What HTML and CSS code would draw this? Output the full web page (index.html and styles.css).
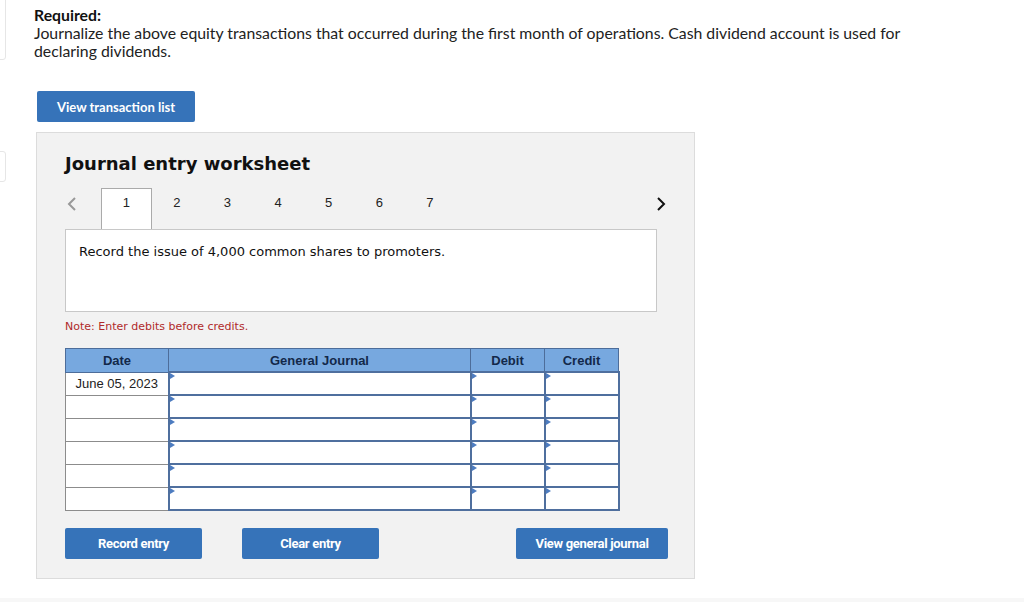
FILE: index.html
```html
<!DOCTYPE html>
<html lang="en">

<head>
    <meta charset="UTF-8">
    <title>Journal entry worksheet</title>
    <link rel="stylesheet" href="styles.css">
</head>

<body>
    <div class="edge edge_top"></div>
    <div class="edge edge_mid"></div>
    <div class="page">
        <div class="required">
            <b>Required:</b>
            <p>Journalize the above equity transactions that occurred during the first month of operations. Cash dividend account is used for declaring dividends.</p>
        </div>
        <button class="btn btn_list">View transaction list</button>

        <div class="sheet">
            <h2>Journal entry worksheet</h2>
            <div class="tabs">
                <span class="arrow arrow_prev">
                    <svg width="10" height="14" viewBox="0 0 10 14"><path d="M8 1 L2 7 L8 13" fill="none" stroke="#999" stroke-width="2"/></svg>
                </span>
                <ul>
                    <li class="on">1</li>
                    <li>2</li>
                    <li>3</li>
                    <li>4</li>
                    <li>5</li>
                    <li>6</li>
                    <li>7</li>
                </ul>
                <span class="arrow arrow_next">
                    <svg width="10" height="14" viewBox="0 0 10 14"><path d="M2 1 L8 7 L2 13" fill="none" stroke="#111" stroke-width="2"/></svg>
                </span>
            </div>
            <div class="task">Record the issue of 4,000 common shares to promoters.</div>
            <p class="note">Note: Enter debits before credits.</p>

            <table class="journal">
                <thead>
                    <tr>
                        <th class="c_date">Date</th>
                        <th class="c_acct">General Journal</th>
                        <th class="c_amt">Debit</th>
                        <th class="c_amt">Credit</th>
                    </tr>
                </thead>
                <tbody>
                    <tr>
                        <td class="date">June 05, 2023</td>
                        <td class="cell"></td>
                        <td class="cell"></td>
                        <td class="cell"></td>
                    </tr>
                    <tr>
                        <td class="date"></td>
                        <td class="cell"></td>
                        <td class="cell"></td>
                        <td class="cell"></td>
                    </tr>
                    <tr>
                        <td class="date"></td>
                        <td class="cell"></td>
                        <td class="cell"></td>
                        <td class="cell"></td>
                    </tr>
                    <tr>
                        <td class="date"></td>
                        <td class="cell"></td>
                        <td class="cell"></td>
                        <td class="cell"></td>
                    </tr>
                    <tr>
                        <td class="date"></td>
                        <td class="cell"></td>
                        <td class="cell"></td>
                        <td class="cell"></td>
                    </tr>
                    <tr>
                        <td class="date"></td>
                        <td class="cell"></td>
                        <td class="cell"></td>
                        <td class="cell"></td>
                    </tr>
                </tbody>
            </table>

            <div class="actions">
                <button class="btn btn_act">Record entry</button>
                <button class="btn btn_act">Clear entry</button>
                <button class="btn btn_act btn_view">View general journal</button>
            </div>
        </div>
    </div>
    <div class="foot"></div>
</body>

</html>
```

FILE: styles.css
```css
html,
body {
    width: 100%;
    height: 100%;
    margin: 0;
    padding: 0;
    background: #fff;
    overflow: hidden;
}

ul {
    margin: 0;
    padding: 0;
    list-style: none;
}

.edge {
    position: absolute;
    left: -4px;
    width: 8px;
    border: 1px solid #e6e6e6;
    border-radius: 3px;
}

.edge_top {
    top: -4px;
    height: 62px;
}

.edge_mid {
    top: 151px;
    height: 29px;
}

.page {
    padding: 6px 0 0 34px;
}

.required {
    font-family: Lato, "Open Sans", sans-serif;
    font-size: 15.8px;
    line-height: 18px;
    color: #222;
    width: 900px;
}

.required b {
    display: block;
    font-weight: 700;
    color: #111;
}

.required p {
    margin: 0;
}

.btn {
    border: 0;
    border-radius: 2px;
    background: #3673b9;
    color: #fff;
    font-weight: 700;
    cursor: pointer;
    padding: 0;
}

.btn_list {
    display: block;
    margin: 31px 0 0 3px;
    width: 158px;
    height: 31px;
    font-family: Lato, "Open Sans", sans-serif;
    font-size: 13px;
}

.sheet {
    margin: 10px 0 0 2px;
    width: 629px;
    height: 425px;
    padding: 20px 0 0 28px;
    background: #f2f2f2;
    border: 1px solid #dcdcdc;
}

.sheet h2 {
    margin: 0;
    font-family: "DejaVu Sans", Verdana, sans-serif;
    font-size: 18px;
    line-height: 22px;
    font-weight: 700;
    color: #111;
}

.tabs {
    display: flex;
    align-items: flex-start;
    margin-top: 14px;
    width: 601px;
    height: 41px;
    font-family: "Liberation Sans", Arial, sans-serif;
    font-size: 13px;
    color: #222;
}

.arrow {
    display: flex;
    align-items: center;
    height: 30px;
}

.arrow_prev {
    width: 35px;
    padding-left: 2px;
}

.arrow_next {
    margin-left: auto;
}

.tabs ul {
    display: flex;
    margin-left: -1px;
}

.tabs li {
    width: 50.6px;
    height: 30px;
    line-height: 28px;
    text-align: center;
}

.tabs li.on {
    height: 41px;
    background: #fff;
    border: 1px solid #aaa;
    border-bottom: 0;
    box-sizing: border-box;
    margin-top: -1px;
    position: relative;
    z-index: 1;
}

.task {
    width: 577px;
    height: 67px;
    margin-top: -1px;
    padding: 14px 0 0 13px;
    background: #fff;
    border: 1px solid #c8c8c8;
    font-family: "DejaVu Sans", Verdana, sans-serif;
    font-size: 13px;
    color: #111;
}

.note {
    margin: 8px 0 0;
    font-family: "DejaVu Sans", Verdana, sans-serif;
    font-size: 11px;
    color: #b02a2a;
}

.journal {
    margin-top: 15px;
    border-collapse: collapse;
    font-family: "Liberation Sans", Arial, sans-serif;
    font-size: 13px;
}

.journal th {
    height: 22px;
    padding: 0;
    background: #77a8df;
    border: 1px solid #4d6d9a;
    color: #13284a;
    font-weight: 700;
}

.c_date {
    width: 102px;
}

.c_acct {
    width: 301px;
}

.c_amt {
    width: 73px;
}

.journal td {
    height: 21px;
    padding: 0;
    background: #fff;
}

.journal td.date {
    border: 1px solid #8c8c8c;
    text-align: center;
    color: #222;
}

.journal td.cell {
    border: 2px solid #4f6f9e;
    position: relative;
}

.journal td.cell::before {
    content: "";
    position: absolute;
    left: 0;
    top: 0;
    border-left: 5px solid #4d7cc0;
    border-top: 3px solid transparent;
    border-bottom: 3px solid transparent;
}

.actions {
    display: flex;
    margin-top: 17px;
    width: 603px;
}

.btn_act {
    width: 137px;
    height: 31px;
    margin-right: 40px;
    font-family: Roboto, "Liberation Sans", sans-serif;
    font-size: 13px;
    letter-spacing: -0.3px;
}

.btn_view {
    width: 152px;
    margin: 0 0 0 auto;
}

.foot {
    position: absolute;
    left: 0;
    right: 0;
    bottom: 0;
    height: 4px;
    background: #f7f7f7;
}
```
